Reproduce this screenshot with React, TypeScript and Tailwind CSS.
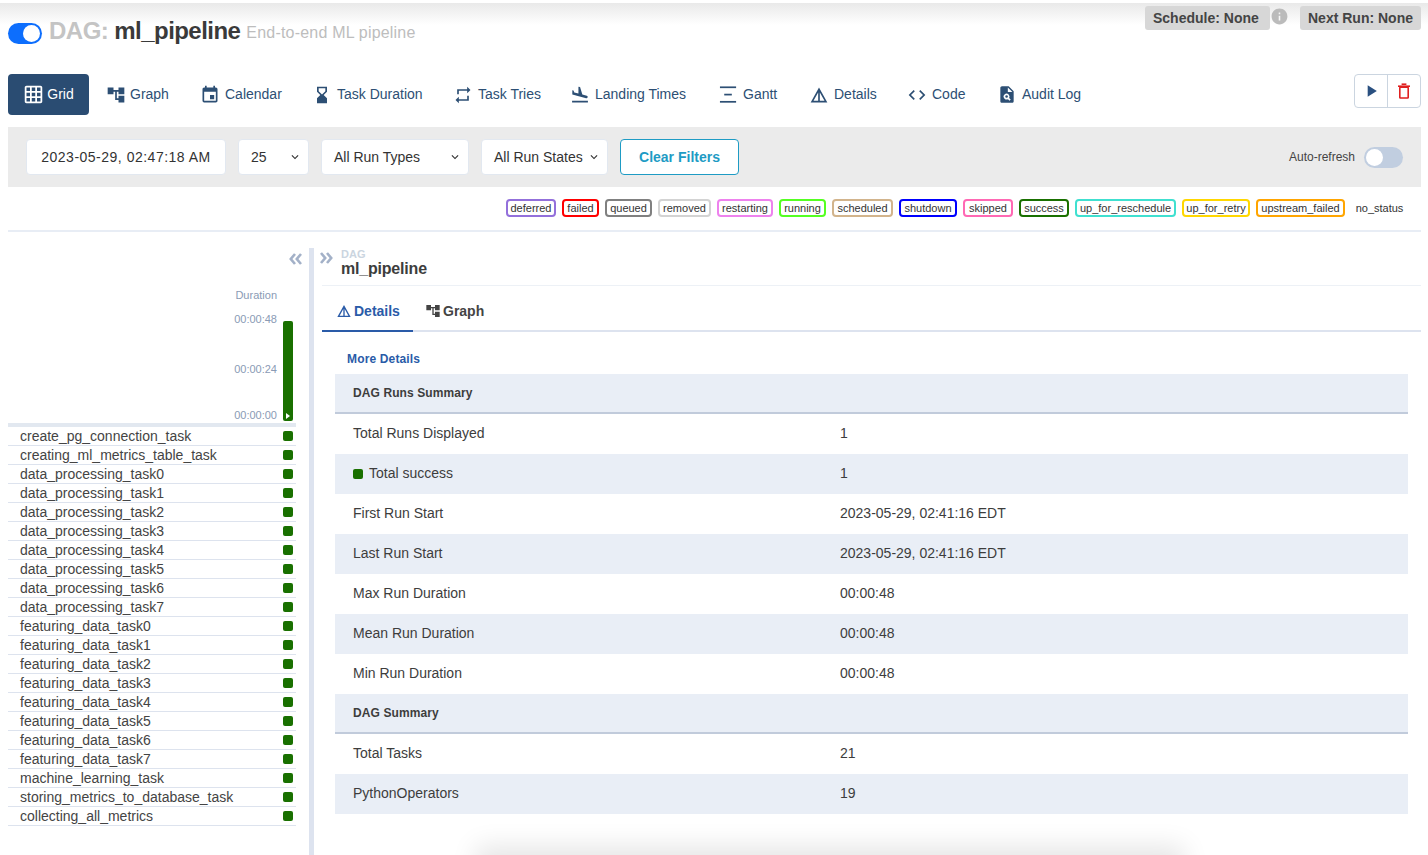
import React from "react";
import { MdGridOn, MdAccountTree, MdEvent, MdHourglassBottom, MdRepeat, MdFlightLand, MdDetails, MdCode, MdPlagiarism, MdPlayArrow, MdInfo, MdExpandMore } from "react-icons/md";

const Gantt = ({ size = 20 }: { size?: number }) => (
  <svg width={size} height={size} viewBox="0 0 20 20" fill="currentColor">
    <rect x="1" y="1.5" width="17" height="1.8" />
    <rect x="5.5" y="9.2" width="8" height="1.8" />
    <rect x="1" y="16.8" width="17" height="1.8" />
  </svg>
);

const Trash = () => (
  <svg width="12" height="16" viewBox="0 0 12 16" fill="none" stroke="#e02020" strokeWidth="1.6">
    <path d="M3.6 1.2h4.8" />
    <path d="M0 3.2h12" />
    <rect x="1.8" y="4.2" width="8.4" height="10.8" rx="0.6" />
  </svg>
);

const DoubleChevron = ({ right }: { right?: boolean }) => (
  <svg width="13" height="12" viewBox="0 0 13 12" fill="none" stroke="#a3b1c8" strokeWidth="2.6" className={right ? "rotate-180" : ""}>
    <path d="M6 1 1.8 6 6 11" />
    <path d="M12 1 7.8 6 12 11" />
  </svg>
);

const legend: [string, string, string][] = [
  ["deferred", "border-[#9370db]", "w-[50px]"],
  ["failed", "border-[#ff0000]", "w-[37px]"],
  ["queued", "border-[#808080]", "w-[47px]"],
  ["removed", "border-[#d3d3d3]", "w-[53px]"],
  ["restarting", "border-[#ee82ee]", "w-[56px]"],
  ["running", "border-[#55ff22]", "w-[47px]"],
  ["scheduled", "border-[#d2b48c]", "w-[61px]"],
  ["shutdown", "border-[#0000ff]", "w-[58px]"],
  ["skipped", "border-[#ff69b4]", "w-[50px]"],
  ["success", "border-[#197000]", "w-[50px]"],
  ["up_for_reschedule", "border-[#40e0d0]", "w-[101px]"],
  ["up_for_retry", "border-[#ffd700]", "w-[68px]"],
  ["upstream_failed", "border-[#ffa500]", "w-[89px]"],
  ["no_status", "border-white", "w-[57px]"],
];

const tasks = [
  "create_pg_connection_task",
  "creating_ml_metrics_table_task",
  "data_processing_task0",
  "data_processing_task1",
  "data_processing_task2",
  "data_processing_task3",
  "data_processing_task4",
  "data_processing_task5",
  "data_processing_task6",
  "data_processing_task7",
  "featuring_data_task0",
  "featuring_data_task1",
  "featuring_data_task2",
  "featuring_data_task3",
  "featuring_data_task4",
  "featuring_data_task5",
  "featuring_data_task6",
  "featuring_data_task7",
  "machine_learning_task",
  "storing_metrics_to_database_task",
  "collecting_all_metrics",
];

const rows: { k: React.ReactNode; v?: string; head?: boolean; alt?: boolean }[] = [
  { k: "DAG Runs Summary", head: true },
  { k: "Total Runs Displayed", v: "1" },
  {
    k: (
      <span className="flex items-center gap-[6px]">
        <span className="w-[10px] h-[10px] rounded-[2px] bg-[#197000] mt-[1px]" />
        Total success
      </span>
    ),
    v: "1",
    alt: true,
  },
  { k: "First Run Start", v: "2023-05-29, 02:41:16 EDT" },
  { k: "Last Run Start", v: "2023-05-29, 02:41:16 EDT", alt: true },
  { k: "Max Run Duration", v: "00:00:48" },
  { k: "Mean Run Duration", v: "00:00:48", alt: true },
  { k: "Min Run Duration", v: "00:00:48" },
  { k: "DAG Summary", head: true },
  { k: "Total Tasks", v: "21" },
  { k: "PythonOperators", v: "19", alt: true },
];

function NavItem({ icon, label, w }: { icon: React.ReactNode; label: string; w: string }) {
  return (
    <div className={`flex items-center gap-[5px] shrink-0 ${w}`}>
      <span className="w-[20px] h-[20px] flex items-center justify-center">{icon}</span>
      <span>{label}</span>
    </div>
  );
}

function Select({ label, w }: { label: string; w: string }) {
  return (
    <div className={`h-[36px] ${w} bg-white rounded-[4px] border border-[#e2e8f0] flex items-center justify-between pl-[12px] pr-[6px] text-[14px] text-[#333]`}>
      <span>{label}</span>
      <MdExpandMore size={14} />
    </div>
  );
}

export default function App() {
  return (
    <div className="relative w-[1428px] h-[855px] overflow-hidden bg-white text-[#333] font-['Liberation_Sans',Arial,sans-serif]">
      <div className="absolute left-0 right-0 top-[3px] h-[22px] bg-gradient-to-b from-[#e9e9e9] to-white" />
      <div className="absolute left-[490px] w-[680px] top-[860px] h-[20px] bg-[#e2e2e2] shadow-[0_0_26px_14px_#e6e6e6]" />

      <div className="relative px-[8px] pr-[7px]">
        {/* header */}
        <div className="h-[74px] flex items-start justify-between">
          <div className="flex items-center mt-[17px] h-[28px]">
            <div className="w-[34px] h-[21px] rounded-full bg-[#0d6efd] flex items-center justify-end pr-[2px] mt-[4px]">
              <span className="w-[17px] h-[17px] rounded-full bg-white" />
            </div>
            <span className="ml-[7px] text-[24px] font-bold text-[#c4c4c4] tracking-[-0.5px]">DAG:</span>
            <span className="ml-[6px] text-[24px] font-bold text-[#3a3a3a] tracking-[-0.55px]">ml_pipeline</span>
            <span className="ml-[6px] text-[16px] mt-[4px] text-[#bdbdbd] tracking-[0.2px]">End-to-end ML pipeline</span>
          </div>
          <div className="flex items-center mt-[6px]">
            <div className="h-[24px] w-[125px] pl-[8px] bg-[#d7d7d7] rounded-[3px] text-[14px] font-bold text-[#444] flex items-center">Schedule: None</div>
            <MdInfo size={19} className="text-[#bbbbbb] w-[19px] mr-[11px] -mt-[4px]" />
            <div className="h-[24px] w-[121px] bg-[#d7d7d7] rounded-[3px] text-[14px] font-bold text-[#444] flex items-center justify-center">Next Run: None</div>
          </div>
        </div>

        {/* nav */}
        <div className="h-[41px] flex items-center text-[14px] text-[#2d4f74]">
          <div className="w-[81px] h-[41px] rounded-[4px] bg-[#2a4c72] text-white flex items-center justify-center gap-[3px] mr-[16px]">
            <MdGridOn size={21} />
            <span>Grid</span>
          </div>
          <NavItem icon={<MdAccountTree size={20} className="translate-x-[1px]" />} label="Graph" w="w-[95px]" />
          <NavItem icon={<MdEvent size={20} />} label="Calendar" w="w-[112px]" />
          <NavItem icon={<MdHourglassBottom size={22} />} label="Task Duration" w="w-[141px]" />
          <NavItem icon={<MdRepeat size={20} />} label="Task Tries" w="w-[117px]" />
          <NavItem icon={<MdFlightLand size={22} />} label="Landing Times" w="w-[148px]" />
          <NavItem icon={<Gantt size={19} />} label="Gantt" w="w-[91px]" />
          <NavItem icon={<MdDetails size={20} />} label="Details" w="w-[98px]" />
          <NavItem icon={<MdCode size={20} />} label="Code" w="w-[90px]" />
          <NavItem icon={<MdPlagiarism size={21} />} label="Audit Log" w="w-[90px]" />
          <div className="ml-auto flex h-[34px] w-[67px] rounded-[4px] border border-[#cbd5e0] -mt-[7px]">
            <div className="flex-1 flex items-center justify-center border-r border-[#cbd5e0]">
              <MdPlayArrow size={20} className="text-[#2a5080]" />
            </div>
            <div className="flex-1 flex items-center justify-center">
              <Trash />
            </div>
          </div>
        </div>

        {/* filters */}
        <div className="mt-[12px] h-[60px] bg-[#ebebeb] flex items-center pl-[18px] pr-[18px]">
          <div className="h-[36px] w-[200px] bg-white rounded-[4px] border border-[#e2e8f0] flex items-center justify-center text-[14px] tracking-[0.5px] text-[#333]">2023-05-29, 02:47:18 AM</div>
          <div className="w-[12px]" />
          <Select label="25" w="w-[71px]" />
          <div className="w-[12px]" />
          <Select label="All Run Types" w="w-[148px]" />
          <div className="w-[12px]" />
          <Select label="All Run States" w="w-[127px]" />
          <div className="w-[12px]" />
          <div className="h-[36px] w-[119px] bg-white rounded-[4px] border border-[#1e9bc4] flex items-center justify-center text-[14px] font-bold text-[#1e9bc4]">Clear Filters</div>
          <div className="ml-auto flex items-center text-[12px] text-[#444]">
            <span>Auto-refresh</span>
            <div className="ml-[9px] w-[39px] h-[21px] rounded-full bg-[#c1cee0] flex items-center pl-[2px]">
              <span className="w-[17px] h-[17px] rounded-full bg-white" />
            </div>
          </div>
        </div>

        {/* legend */}
        <div className="mt-[12px] h-[18px] flex justify-end gap-[6px] pr-[13px]">
          {legend.map(([l, c, w]) => (
            <div key={l} className={`h-[18px] ${w} text-center border-2 ${c} rounded-[4px] text-[11px] leading-[14px] whitespace-nowrap text-[#333] bg-white`}>{l}</div>
          ))}
        </div>

        <div className="mt-[13px] h-[2px] bg-[#e8edf5]" />

        {/* main */}
        <div className="flex mt-[15px] h-[610px]">
          {/* left */}
          <div className="w-[288px] shrink-0">
            <div className="h-[20px] flex justify-end items-center">
              <span className="mr-[-6px] mt-[4px]"><DoubleChevron /></span>
            </div>
            <div className="mt-[21px] h-[15px] pr-[19px] text-right text-[11px] leading-[15px] text-[#8a9bb5]">Duration</div>
            <div className="mt-[18px] h-[100px] flex justify-end">
              <div className="flex flex-col justify-between text-[11px] leading-[13px] text-[#8a9bb5] text-right pr-[6px] -mt-[8px] h-[109px]">
                <span>00:00:48</span>
                <span className="mt-[3px]">00:00:24</span>
                <span>00:00:00</span>
              </div>
              <div className="w-[10px] h-[100px] bg-[#197000] rounded-[2px] mr-[3px] flex items-end justify-center pb-[2px]">
                <span className="w-0 h-0 border-y-[3px] border-y-transparent border-l-[4px] border-l-white" />
              </div>
            </div>
            <div className="mt-[2px] h-[4px] bg-[#e2e8f0]" />
            <div>
              {tasks.map((t) => (
                <div key={t} className="h-[19px] flex items-center justify-between border-b border-[#dde3ee] pl-[12px] pr-[3px] text-[14px] text-[#444]">
                  <span>{t}</span>
                  <span className="w-[10px] h-[10px] rounded-[2px] bg-[#197000]" />
                </div>
              ))}
            </div>
          </div>

          <div className="w-[13px]" />
          <div className="w-[5px] bg-[#dde3ef] h-[607px] mt-[1px] shrink-0" />

          {/* right */}
          <div className="flex-1 flex flex-col pl-[8px] min-w-0">
            <div className="flex h-[39px] border-b border-[#edf1f6] w-[1099px]">
              <span className="mt-[5px] -ml-[2px]"><DoubleChevron right /></span>
              <div className="ml-[8px]">
                <div className="text-[11px] leading-[13px] mt-[1px] font-bold text-[#cbd5e0]">DAG</div>
                <div className="text-[16px] leading-[16px] font-bold text-[#3d3d3d] tracking-[-0.2px]">ml_pipeline</div>
              </div>
            </div>
            <div className="flex h-[46px] border-b-2 border-[#dde3ef] text-[14px] font-bold w-[1099px]">
              <div className="w-[91px] h-[46px] border-b-2 border-[#2a5ba8] flex items-center pl-[14px] pt-[6px] gap-[2px] text-[#2a5ba8]">
                <MdDetails size={16} />
                Details
              </div>
              <div className="w-[91px] h-[46px] flex items-center pl-[12px] pt-[4px] gap-[2px] text-[#444]">
                <MdAccountTree size={16} />
                Graph
              </div>
            </div>
            <div className="pl-[13px] pr-[13px] w-[1099px]">
              <div className="h-[42px] pl-[12px] flex items-end pb-[6px] text-[12px] font-bold tracking-[0.15px] text-[#2a5ba8]">More Details</div>
              {rows.map((r, i) => (
                <div
                  key={i}
                  className={`flex items-center h-[40px] pl-[18px] ${r.head ? "bg-[#e9eef6] border-b-2 border-[#c1cbdb] text-[12px] font-bold tracking-[0.1px] text-[#3d3d3d]" : r.alt ? "bg-[#e9eef6] pb-[2px] text-[14px] text-[#3d3d3d]" : "pb-[2px] text-[14px] text-[#3d3d3d]"}`}
                >
                  <div className="w-[487px]">{r.k}</div>
                  <div>{r.v}</div>
                </div>
              ))}
            </div>
          </div>
        </div>
      </div>
    </div>
  );
}
